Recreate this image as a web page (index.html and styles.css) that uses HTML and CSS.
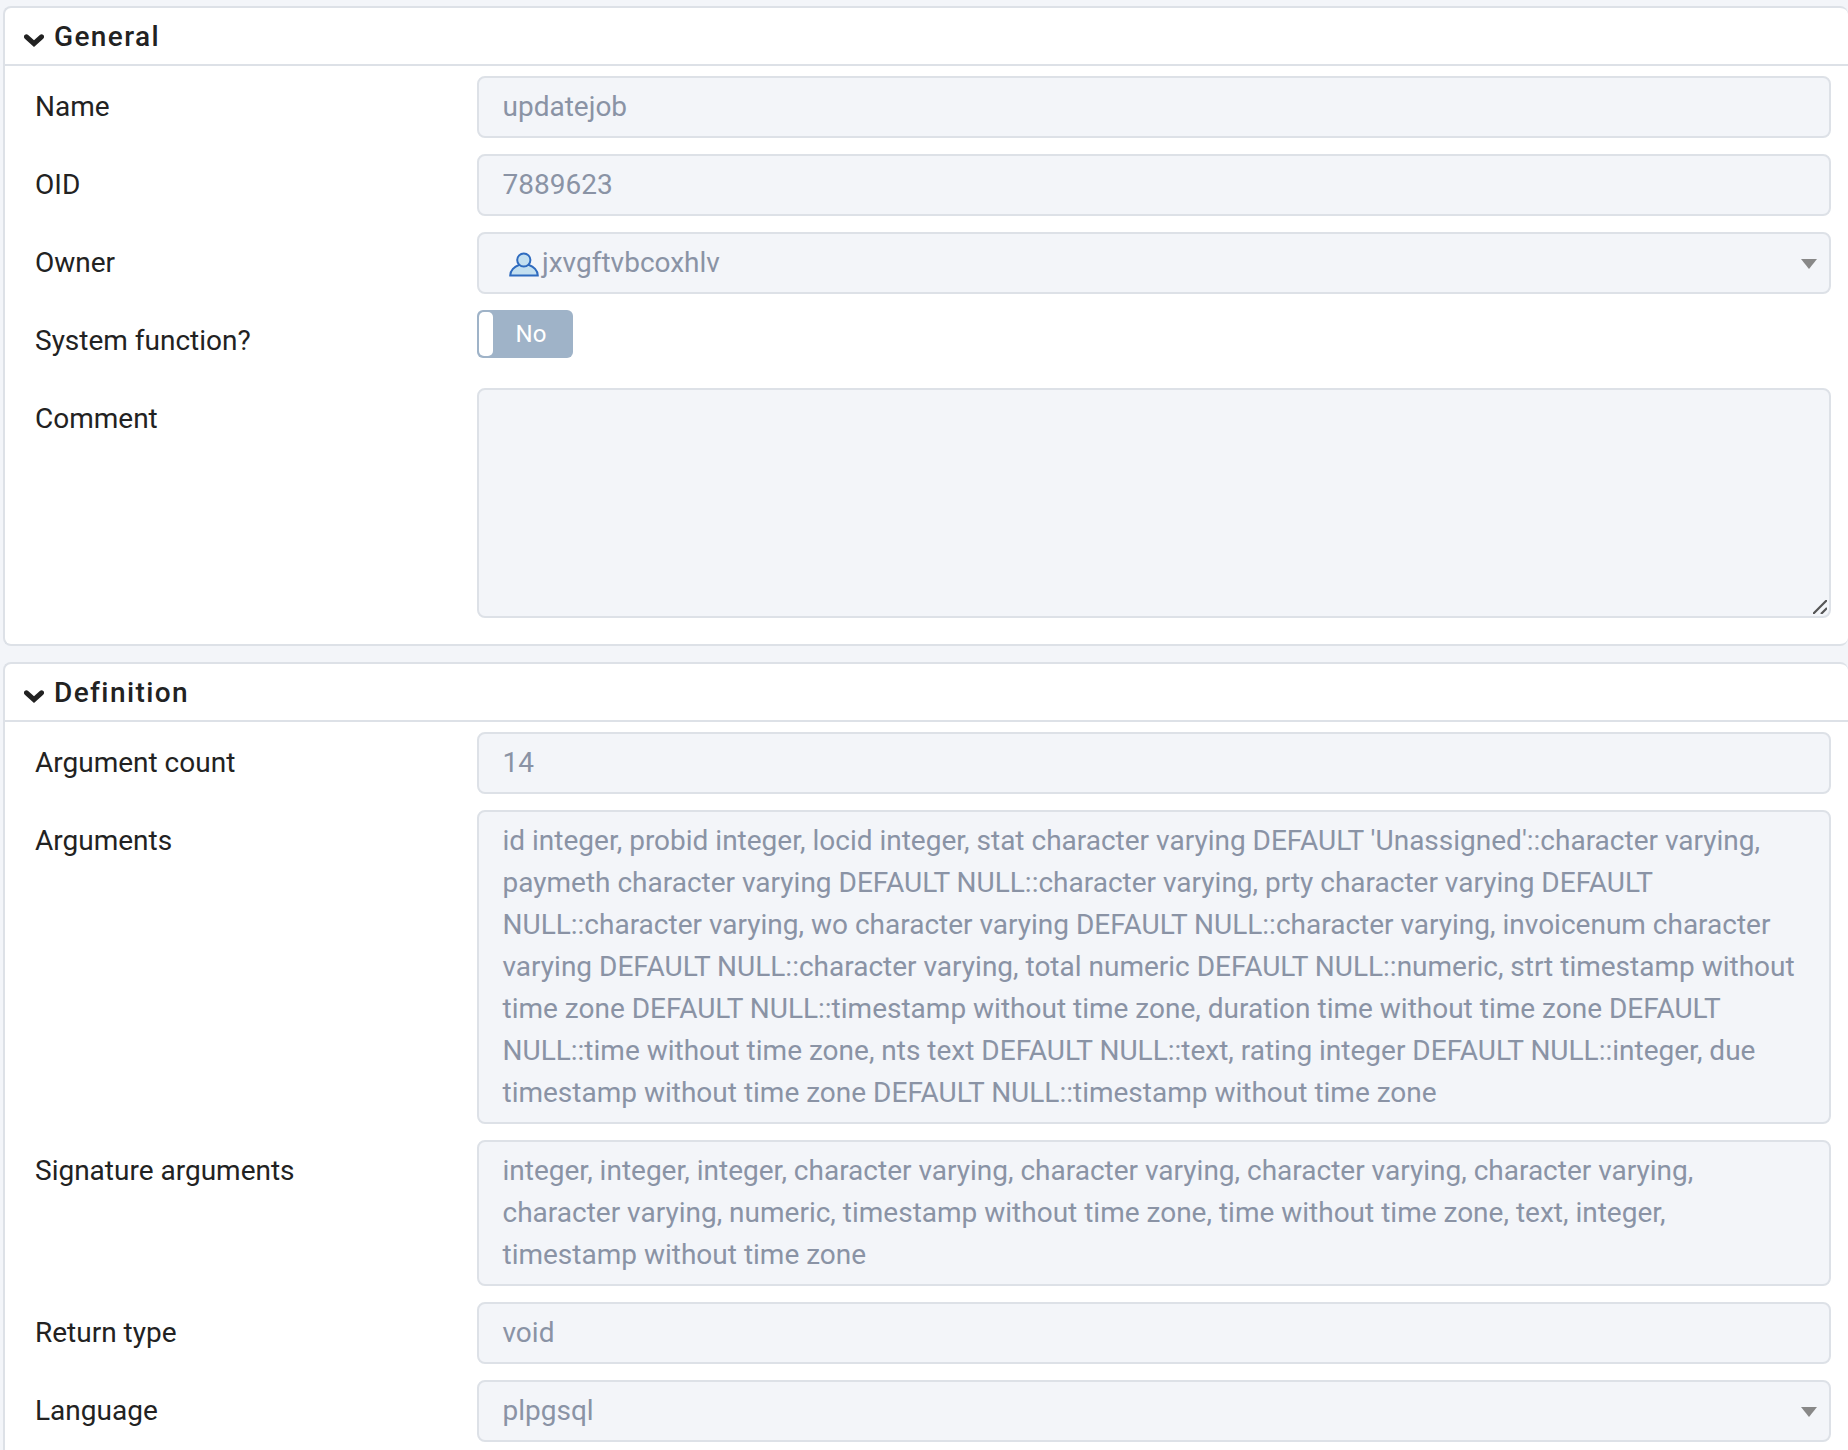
FILE: index.html
```
<!DOCTYPE html>
<html lang="en">
<head>
<meta charset="utf-8">
<title>Function properties</title>
<link rel="stylesheet" href="styles.css">
</head>
<body>
<main class="page">
  <section class="panel">
    <h2 class="panel-head"><svg class="chev" viewBox="0 0 20 13"><path d="M2.5 2.8 10 9.6 17.5 2.8" /></svg>General</h2>
    <div class="panel-body">
      <div class="row"><label class="lbl">Name</label><div class="field">updatejob</div></div>
      <div class="row"><label class="lbl">OID</label><div class="field">7889623</div></div>
      <div class="row"><label class="lbl">Owner</label>
        <div class="field field-select field-owner">
          <svg class="user" viewBox="0 0 30 25"><path class="user-body" d="M1.2 23.5C1.2 18.5 5.5 14.5 10 13H20C24.5 14.5 28.8 18.5 28.8 23.5Z"/><circle class="user-head" cx="14.8" cy="8" r="6.6"/></svg>
          <span>jxvgftvbcoxhlv</span><span class="caret"></span>
        </div>
      </div>
      <div class="row"><label class="lbl">System function?</label>
        <div class="toggle"><span class="knob"></span><span class="toggle-text">No</span></div>
      </div>
      <div class="row"><label class="lbl">Comment</label>
        <div class="field field-area">
          <svg class="grip" viewBox="0 0 14 14"><path d="M0 14 14 0M8 14 14 8"/></svg>
        </div>
      </div>
    </div>
  </section>
  <section class="panel">
    <h2 class="panel-head"><svg class="chev" viewBox="0 0 20 13"><path d="M2.5 2.8 10 9.6 17.5 2.8" /></svg>Definition</h2>
    <div class="panel-body">
      <div class="row"><label class="lbl">Argument count</label><div class="field">14</div></div>
      <div class="row"><label class="lbl">Arguments</label><div class="field">id integer, probid integer, locid integer, stat character varying DEFAULT 'Unassigned'::character varying, paymeth character varying DEFAULT NULL::character varying, prty character varying DEFAULT NULL::character varying, wo character varying DEFAULT NULL::character varying, invoicenum character varying DEFAULT NULL::character varying, total numeric DEFAULT NULL::numeric, strt timestamp without time zone DEFAULT NULL::timestamp without time zone, duration time without time zone DEFAULT NULL::time without time zone, nts text DEFAULT NULL::text, rating integer DEFAULT NULL::integer, due timestamp without time zone DEFAULT NULL::timestamp without time zone</div></div>
      <div class="row"><label class="lbl">Signature arguments</label><div class="field">integer, integer, integer, character varying, character varying, character varying, character varying, character varying, numeric, timestamp without time zone, time without time zone, text, integer, timestamp without time zone</div></div>
      <div class="row"><label class="lbl">Return type</label><div class="field">void</div></div>
      <div class="row"><label class="lbl">Language</label><div class="field field-select">plpgsql<span class="caret"></span></div></div>
    </div>
  </section>
</main>
</body>
</html>
```
FILE: styles.css
```
html, body { margin: 0; padding: 0; }
body {
  background: #f3f5f9;
  font-family: Roboto, "Liberation Sans", sans-serif;
  font-size: 28px;
  line-height: 42px;
  color: #222;
  height: 1450px;
  overflow: hidden;
}
.page {
  padding: 6px 0 0 3px;
  display: flex;
  flex-direction: column;
  gap: 16px;
}
.panel {
  background: #fff;
  border: 2px solid #dde1e7;
  border-right: 0;
  border-radius: 8px;
}
.panel-head {
  margin: 0;
  height: 54px;
  box-sizing: content-box;
  display: flex;
  align-items: center;
  gap: 10px;
  padding: 2px 0 0 19px;
  border-bottom: 2px solid #dde1e7;
  font-size: 28px;
  font-weight: 500;
  letter-spacing: 1.4px;
  color: #222;
}
.chev { width: 20px; height: 13px; flex: none; margin-top: 7px; }
.chev path { fill: none; stroke: #222; stroke-width: 5; stroke-linecap: round; }
.panel-body {
  padding: 10px 18px 26px 0;
  display: flex;
  flex-direction: column;
  gap: 16px;
}
.row {
  display: grid;
  grid-template-columns: 472px 1354px;
  min-height: 62px;
}
.lbl {
  padding: 10px 0 0 30px;
}
.field {
  position: relative;
  background: #f3f5f9;
  border: 2px solid #dde1e7;
  border-radius: 8px;
  padding: 8px 23.5px;
  color: #8a93a5;
}
.field-select { padding-right: 60px; }
.field-owner { display: flex; align-items: center; gap: 3px; padding-left: 30px; }
.user { width: 30px; height: 25px; flex: none; margin-top: 2px; }
.user-body, .user-head { fill: #c3dff0; stroke: #2f6bbf; stroke-width: 2; }
.caret {
  position: absolute;
  right: 12px;
  top: 25px;
  width: 0;
  height: 0;
  border-left: 8px solid transparent;
  border-right: 8px solid transparent;
  border-top: 10px solid #888;
}
.field-area { height: 230px; box-sizing: border-box; }
.grip {
  position: absolute;
  right: 2px;
  bottom: 2px;
  width: 14px;
  height: 14px;
}
.grip path { fill: none; stroke: #555; stroke-width: 2.2; }
.toggle {
  width: 96px;
  height: 48px;
  box-sizing: border-box;
  background: #9fb3c8;
  border-radius: 6px;
  display: flex;
  align-items: center;
  padding: 2px;
  color: #fff;
}
.knob {
  width: 14px;
  height: 44px;
  background: #fff;
  border-radius: 5px;
  flex: none;
}
.toggle-text {
  flex: 1;
  text-align: center;
  font-size: 24px;
  line-height: 44px;
  padding-right: 2px;
}
```
